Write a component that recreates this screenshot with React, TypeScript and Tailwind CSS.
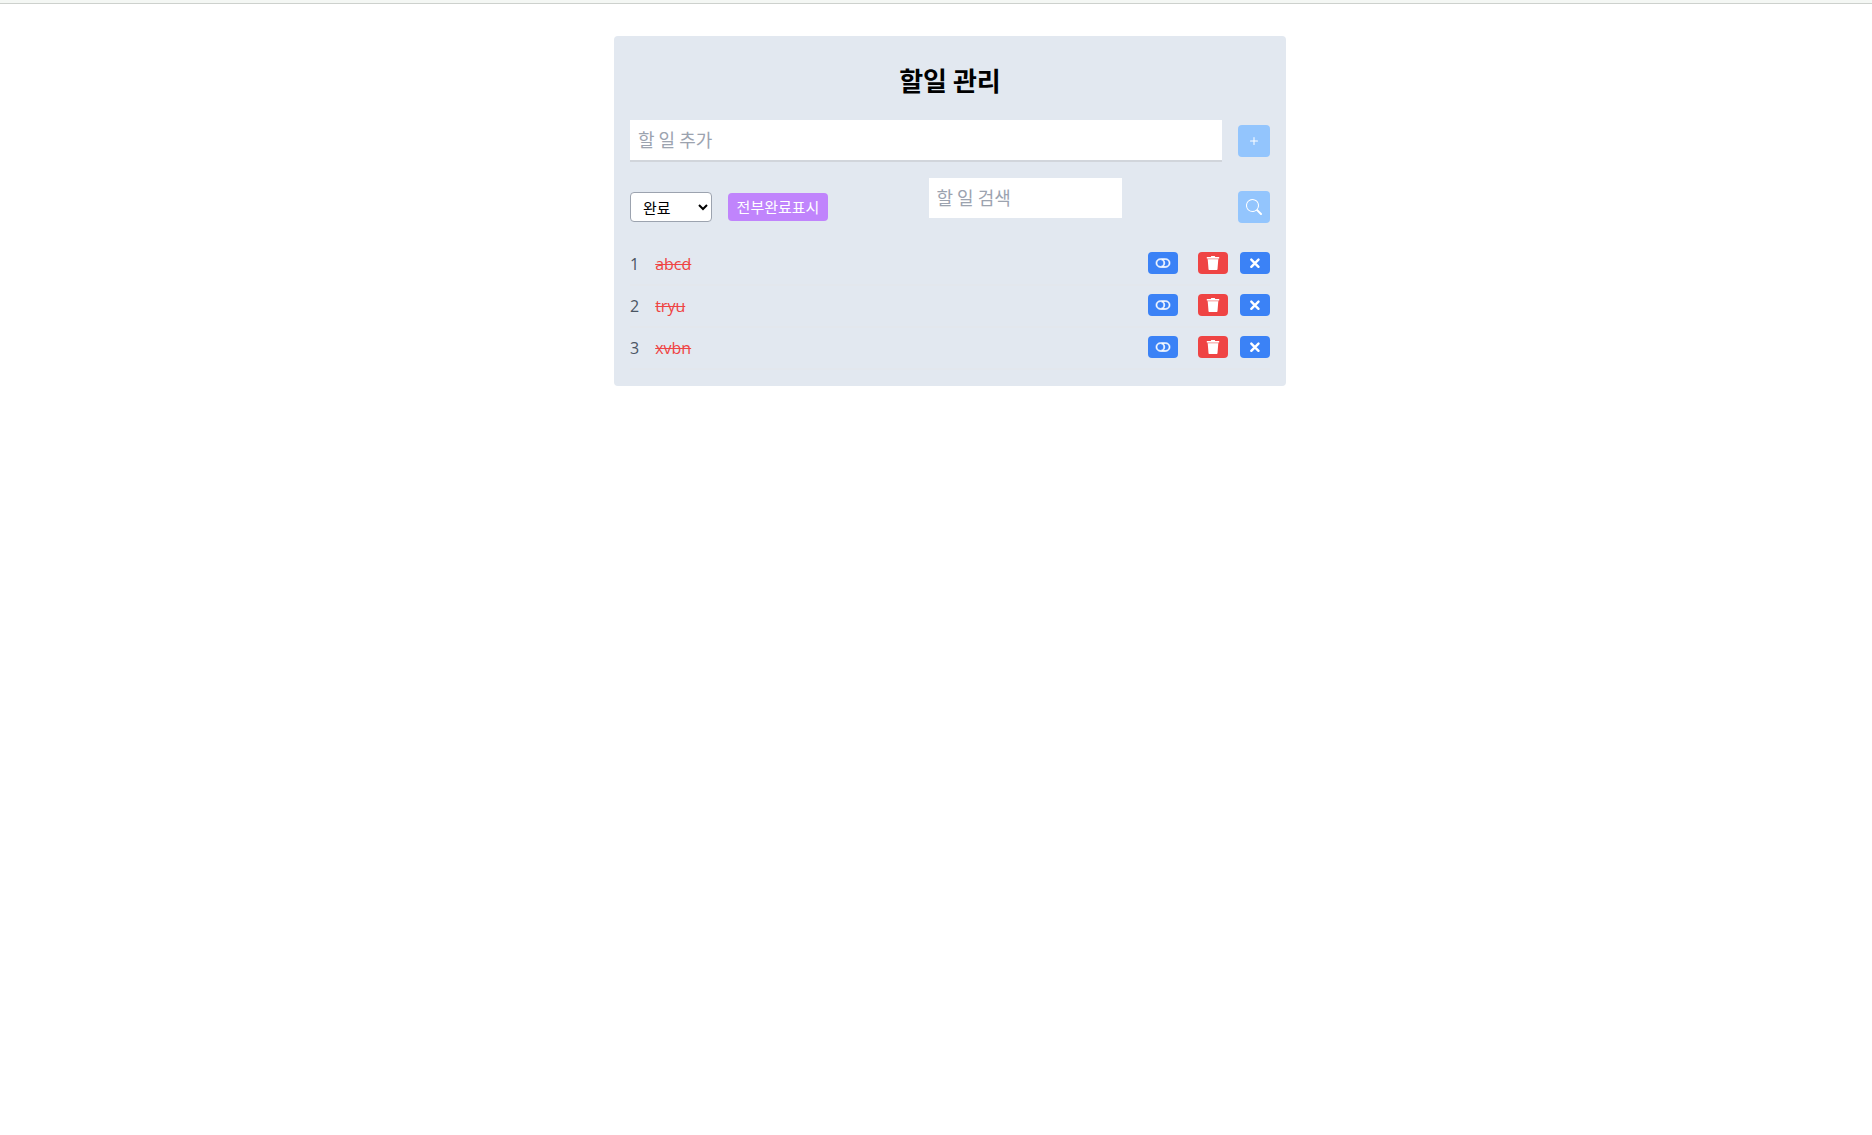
import { useState } from "react";
import { BsPlus, BsSearch, BsToggleOff } from "react-icons/bs";

const todos = [
  { id: 1, text: "abcd" },
  { id: 2, text: "tryu" },
  { id: 3, text: "xvbn" },
];

function TrashIcon() {
  return (
    <svg width="14" height="14" viewBox="0 0 14 14" fill="currentColor">
      <path d="M4.9 1V.5c0-.3.2-.5.5-.5h3.2c.3 0 .5.2.5.5V1h4.1v1.5H.8V1z" />
      <path d="M1.4 2.5h11.2v.8H1.4z" opacity="0.6" />
      <path d="M1.7 3.3h10.6l-.8 9.7c0 .6-.4 1-1 1h-7c-.6 0-1-.4-1-1z" />
    </svg>
  );
}

function CrossIcon() {
  return (
    <svg
      width="14"
      height="14"
      viewBox="0 0 14 14"
      fill="none"
      stroke="currentColor"
      strokeWidth="2.4"
      strokeLinecap="round"
    >
      <path d="M3.3 3.6l7.2 7.2M10.5 3.6l-7.2 7.2" />
    </svg>
  );
}

export default function App() {
  const [filter, setFilter] = useState("done");

  return (
    <div className="min-h-screen bg-white font-['Open_Sans','Noto_Sans_CJK_KR',sans-serif] text-base text-black">
      <div className="h-1 border-b border-[#cdd1cd] bg-[#f4f7f4]" />
      <main className="pt-8 pl-7">
        <section className="mx-auto max-w-2xl rounded bg-[#e2e8f0] p-4">
          <h1 className="mt-2 mb-5 text-center font-['Noto_Sans_CJK_KR',sans-serif] text-[26px] leading-10 font-bold">
            할일 관리
          </h1>

          <form className="flex items-center gap-4" onSubmit={(e) => e.preventDefault()}>
            <input
              type="text"
              aria-label="할 일 추가"
              placeholder="할 일 추가"
              className="h-[42px] min-w-0 flex-1 border-b-2 border-[#d1d5db] bg-white px-2 pb-0.5 font-['Noto_Sans_CJK_KR',sans-serif] text-lg outline-none placeholder:text-[#9ca3af]"
            />
            <button
              type="submit"
              aria-label="추가"
              className="flex size-8 items-center justify-center rounded bg-[#93c5fd] text-white"
            >
              <BsPlus size={16} />
            </button>
          </form>

          <form
            className="mt-4 flex items-center justify-between"
            onSubmit={(e) => e.preventDefault()}
          >
            <div className="flex items-center gap-4">
              <select
                aria-label="상태"
                value={filter}
                onChange={(e) => setFilter(e.target.value)}
                className="h-[30px] w-[82px] rounded border border-[#9ca3af] bg-white px-2 font-['Noto_Sans_CJK_KR',sans-serif] text-[15px]"
              >
                <option value="all">전체</option>
                <option value="done">완료</option>
                <option value="open">미완료</option>
              </select>
              <button
                type="button"
                className="h-7 w-[100px] rounded bg-[#c084fc] text-center font-['Noto_Sans_CJK_KR',sans-serif] text-[15px] leading-7 whitespace-nowrap text-white"
              >
                전부완료표시
              </button>
            </div>
            <input
              type="text"
              aria-label="할 일 검색"
              placeholder="할 일 검색"
              className="mr-4 mb-[18px] h-10 w-[193px] bg-white px-2 pb-0.5 font-['Noto_Sans_CJK_KR',sans-serif] text-lg outline-none placeholder:text-[#9ca3af]"
            />
            <button
              type="submit"
              aria-label="검색"
              className="flex size-8 items-center justify-center rounded bg-[#93c5fd] text-white"
            >
              <BsSearch size={16} />
            </button>
          </form>

          <ul className="mt-2">
            {todos.map((todo) => (
              <li
                key={todo.id}
                className="flex items-start border-b-2 border-[#e3e7ed] py-2 leading-6"
              >
                <span className="mr-4 text-[#4b5563]">{todo.id}</span>
                <span className="flex-1 text-[#ef4444] line-through">{todo.text}</span>
                <button
                  type="button"
                  aria-label="상태 변경"
                  className="mr-5 rounded bg-[#3b82f6] px-2 py-1 text-white"
                >
                  <BsToggleOff size={14} className="overflow-visible stroke-current stroke-[0.8]" />
                </button>
                <button
                  type="button"
                  aria-label="삭제"
                  className="mr-3 rounded bg-[#ef4444] px-2 py-1 text-white"
                >
                  <TrashIcon />
                </button>
                <button
                  type="button"
                  aria-label="닫기"
                  className="rounded bg-[#3b82f6] px-2 py-1 text-white"
                >
                  <CrossIcon />
                </button>
              </li>
            ))}
          </ul>
        </section>
      </main>
    </div>
  );
}
